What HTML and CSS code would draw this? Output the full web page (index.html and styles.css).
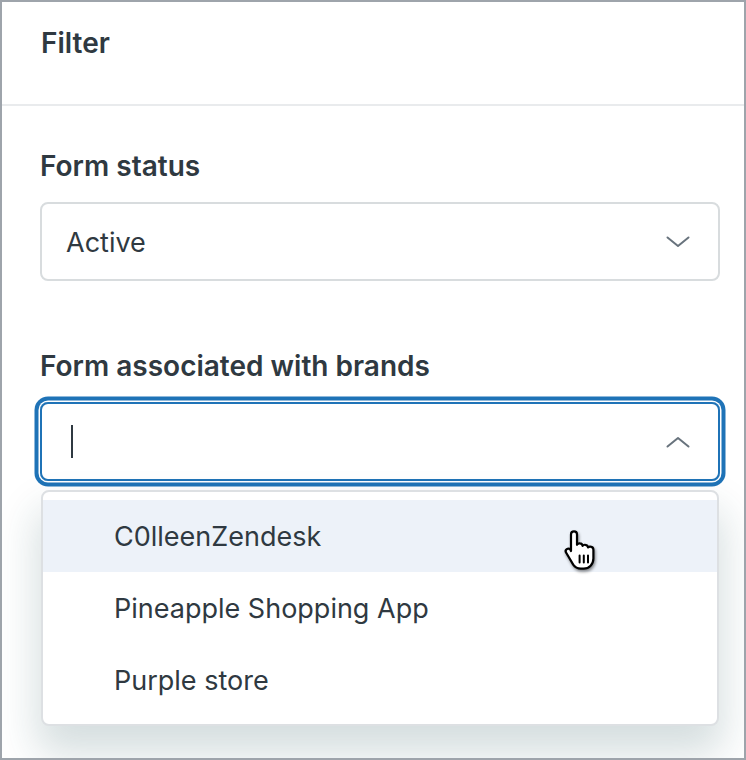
FILE: index.html
```html
<!DOCTYPE html>
<html>
<head>
<meta charset="utf-8">
<link rel="stylesheet" href="styles.css">
</head>
<body>
<div class="frame">
  <div class="header">Filter</div>
  <div class="content">
    <div class="field">
      <div class="label">Form status</div>
      <div class="select">
        <span class="value">Active</span>
        <svg class="chev" width="24" height="12" viewBox="0 0 24 12"><polyline points="1.5,1.5 12,10 22.5,1.5" fill="none" stroke="#68737d" stroke-width="2" stroke-linecap="round" stroke-linejoin="round"/></svg>
      </div>
    </div>
    <div class="field">
      <div class="label">Form associated with brands</div>
      <div class="select focused">
        <span class="caret"></span>
        <svg class="chev" width="24" height="12" viewBox="0 0 24 12"><polyline points="1.5,10.5 12,2 22.5,10.5" fill="none" stroke="#68737d" stroke-width="2" stroke-linecap="round" stroke-linejoin="round"/></svg>
      </div>
      <div class="menu">
        <div class="item active">C0lleenZendesk</div>
        <div class="item">Pineapple Shopping App</div>
        <div class="item">Purple store</div>
        <svg class="cursor" width="34" height="42" viewBox="0 0 17 21">
          <path d="M5.5 1.2c.9 0 1.5.6 1.5 1.5v5.2c.3-.5.9-.8 1.5-.7.7.1 1.2.6 1.3 1.2.3-.4.8-.6 1.4-.5.7.1 1.2.6 1.3 1.3.3-.3.8-.5 1.3-.4.8.1 1.4.8 1.4 1.6v4.4c0 2.8-2.1 5-4.8 5H8.9c-1.6 0-2.9-.7-3.8-2L1.6 11.9c-.4-.6-.3-1.4.3-1.8.6-.4 1.3-.3 1.8.2L4 11V2.7c0-.9.6-1.5 1.5-1.5z" fill="#fff" stroke="#000" stroke-width="1.1" stroke-linejoin="round"/>
          <path d="M8.3 13.2v3.6M10.4 13.2v3.6M12.5 13.2v3.6" stroke="#000" stroke-width="1" stroke-linecap="round"/>
        </svg>
      </div>
    </div>
  </div>
</div>
</body>
</html>
```
FILE: styles.css
```css
* { box-sizing: border-box; }
html, body { margin: 0; padding: 0; background: #fff; }
body {
  font-family: Inter, "Noto Sans", "Liberation Sans", sans-serif;
  color: #2f3941;
}
.frame {
  width: 746px;
  height: 760px;
  border: 2px solid #9ea4ab;
  overflow: hidden;
  background: #fff;
}
.header {
  height: 104px;
  border-bottom: 2px solid #e9ebed;
  padding: 21px 0 0 39px;
  font-size: 28px;
  font-weight: 600;
  line-height: 40px;
}
.content {
  padding: 40px 24px 0 38px;
}
.field { position: relative; }
.field + .field { margin-top: 65px; }
.label {
  font-size: 28px;
  font-weight: 600;
  line-height: 40px;
  margin-bottom: 16px;
}
.select {
  height: 79px;
  border: 2px solid #d8dcde;
  border-radius: 8px;
  display: flex;
  align-items: center;
  padding: 0 28px 0 24px;
  font-size: 27px;
}
.select .value { flex: 1; padding-top: 2px; }
.chev { margin-left: auto; }
.select.focused {
  border-color: #1f73b7;
  box-shadow: 0 0 0 1.5px #fff, 0 0 0 5.5px #1f73b7;
  padding-left: 29px;
}
.caret {
  width: 2px;
  height: 33px;
  background: #2f3941;
}
.menu {
  position: relative;
  margin: 9px 1px 0 1px;
  border: 2px solid #dde0e3;
  border-radius: 8px;
  padding: 8px 0;
  background: #fff;
  box-shadow: 0 24px 40px 4px rgba(23, 73, 77, 0.18);
}
.item {
  height: 72px;
  display: flex;
  align-items: center;
  padding-left: 71px;
  font-size: 27px;
}
.item.active { background: #edf2f9; }
.cursor {
  position: absolute;
  left: 520px;
  top: 37px;
  filter: drop-shadow(1px 2px 1.5px rgba(0,0,0,0.45));
}
```
